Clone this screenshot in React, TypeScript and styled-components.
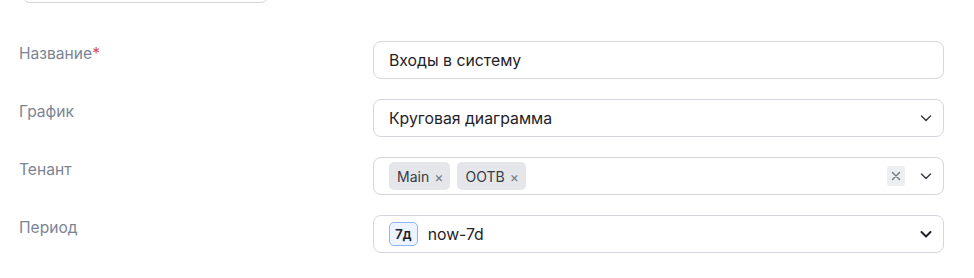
import React from "react";
import styled, { createGlobalStyle } from "styled-components";

const Global = createGlobalStyle`
  html, body { margin: 0; padding: 0; background: #fff; }
  body { font-family: Inter, "Noto Sans", sans-serif; -webkit-font-smoothing: antialiased; }
  * { box-sizing: border-box; }
`;

const Page = styled.div`
  width: 974px;
  height: 278px;
  overflow: hidden;
  padding-left: 19px;
`;

const TopStub = styled.div`
  width: 247px;
  height: 38px;
  margin-top: -35px;
  margin-left: 3px;
  border: 1px solid #d3d6dc;
  border-radius: 8px;
`;

const Form = styled.div`
  display: grid;
  grid-template-columns: 354px 571px;
  row-gap: 20px;
  margin-top: 38px;
`;

const Label = styled.div`
  font-size: 15.6px;
  line-height: 20px;
  color: #7c8494;
  padding-top: 3px;
`;

const Req = styled.span`
  color: #e5484d;
`;

const Field = styled.div`
  height: 38px;
  border: 1px solid #d3d6dc;
  border-radius: 8px;
  display: flex;
  align-items: center;
  padding: 0 10px 0 15px;
  font-size: 15.8px;
  color: #1f2329;
  gap: 8px;
`;

const Value = styled.span`
  flex: 1;
  white-space: nowrap;
`;

const Tags = styled.div`
  flex: 1;
  display: flex;
  gap: 7px;
`;

const Tag = styled.span`
  display: inline-flex;
  align-items: center;
  gap: 5px;
  height: 28px;
  padding: 0 7px 0 8px;
  background: #e4e6ea;
  border-radius: 5px;
  font-size: 14px;
  color: #363b44;
`;

const TagX = styled.span`
  font-size: 14px;
  color: #6f7682;
`;

const ClearBtn = styled.span`
  width: 18px;
  height: 20px;
  border-radius: 3px;
  background: #eceef1;
  display: inline-flex;
  align-items: center;
  justify-content: center;
  margin-right: 6px;
`;

const Badge = styled.span`
  display: inline-flex;
  align-items: center;
  justify-content: center;
  height: 24px;
  padding: 0 5px;
  border: 1px solid #8fb5f5;
  background: #eef4ff;
  border-radius: 5px;
  font-size: 13.5px;
  font-weight: 600;
  color: #1f2329;
  margin-right: 2px;
`;

const Chevron = ({ bold }: { bold?: boolean }) => (
  <svg width="14" height="14" viewBox="0 0 14 14" fill="none">
    <path
      d="M2.5 5 L7 9.5 L11.5 5"
      stroke={bold ? "#1f2329" : "#3a3f47"}
      strokeWidth={bold ? 2 : 1.5}
      strokeLinecap="round"
      strokeLinejoin="round"
    />
  </svg>
);

const Cross = () => (
  <svg width="10" height="10" viewBox="0 0 10 10">
    <path d="M1.5 1.5 L8.5 8.5 M8.5 1.5 L1.5 8.5" stroke="#6f7682" strokeWidth="1.4" strokeLinecap="round" />
  </svg>
);

export default function App() {
  return (
    <Page>
      <Global />
      <TopStub />
      <Form>
        <Label>
          Название<Req>*</Req>
        </Label>
        <Field>
          <Value>Входы в систему</Value>
        </Field>

        <Label>График</Label>
        <Field>
          <Value>Круговая диаграмма</Value>
          <Chevron />
        </Field>

        <Label>Тенант</Label>
        <Field>
          <Tags>
            <Tag>
              Main <TagX>×</TagX>
            </Tag>
            <Tag>
              OOTB <TagX>×</TagX>
            </Tag>
          </Tags>
          <ClearBtn>
            <Cross />
          </ClearBtn>
          <Chevron />
        </Field>

        <Label>Период</Label>
        <Field>
          <Badge>7д</Badge>
          <Value>now-7d</Value>
          <Chevron bold />
        </Field>
      </Form>
    </Page>
  );
}
